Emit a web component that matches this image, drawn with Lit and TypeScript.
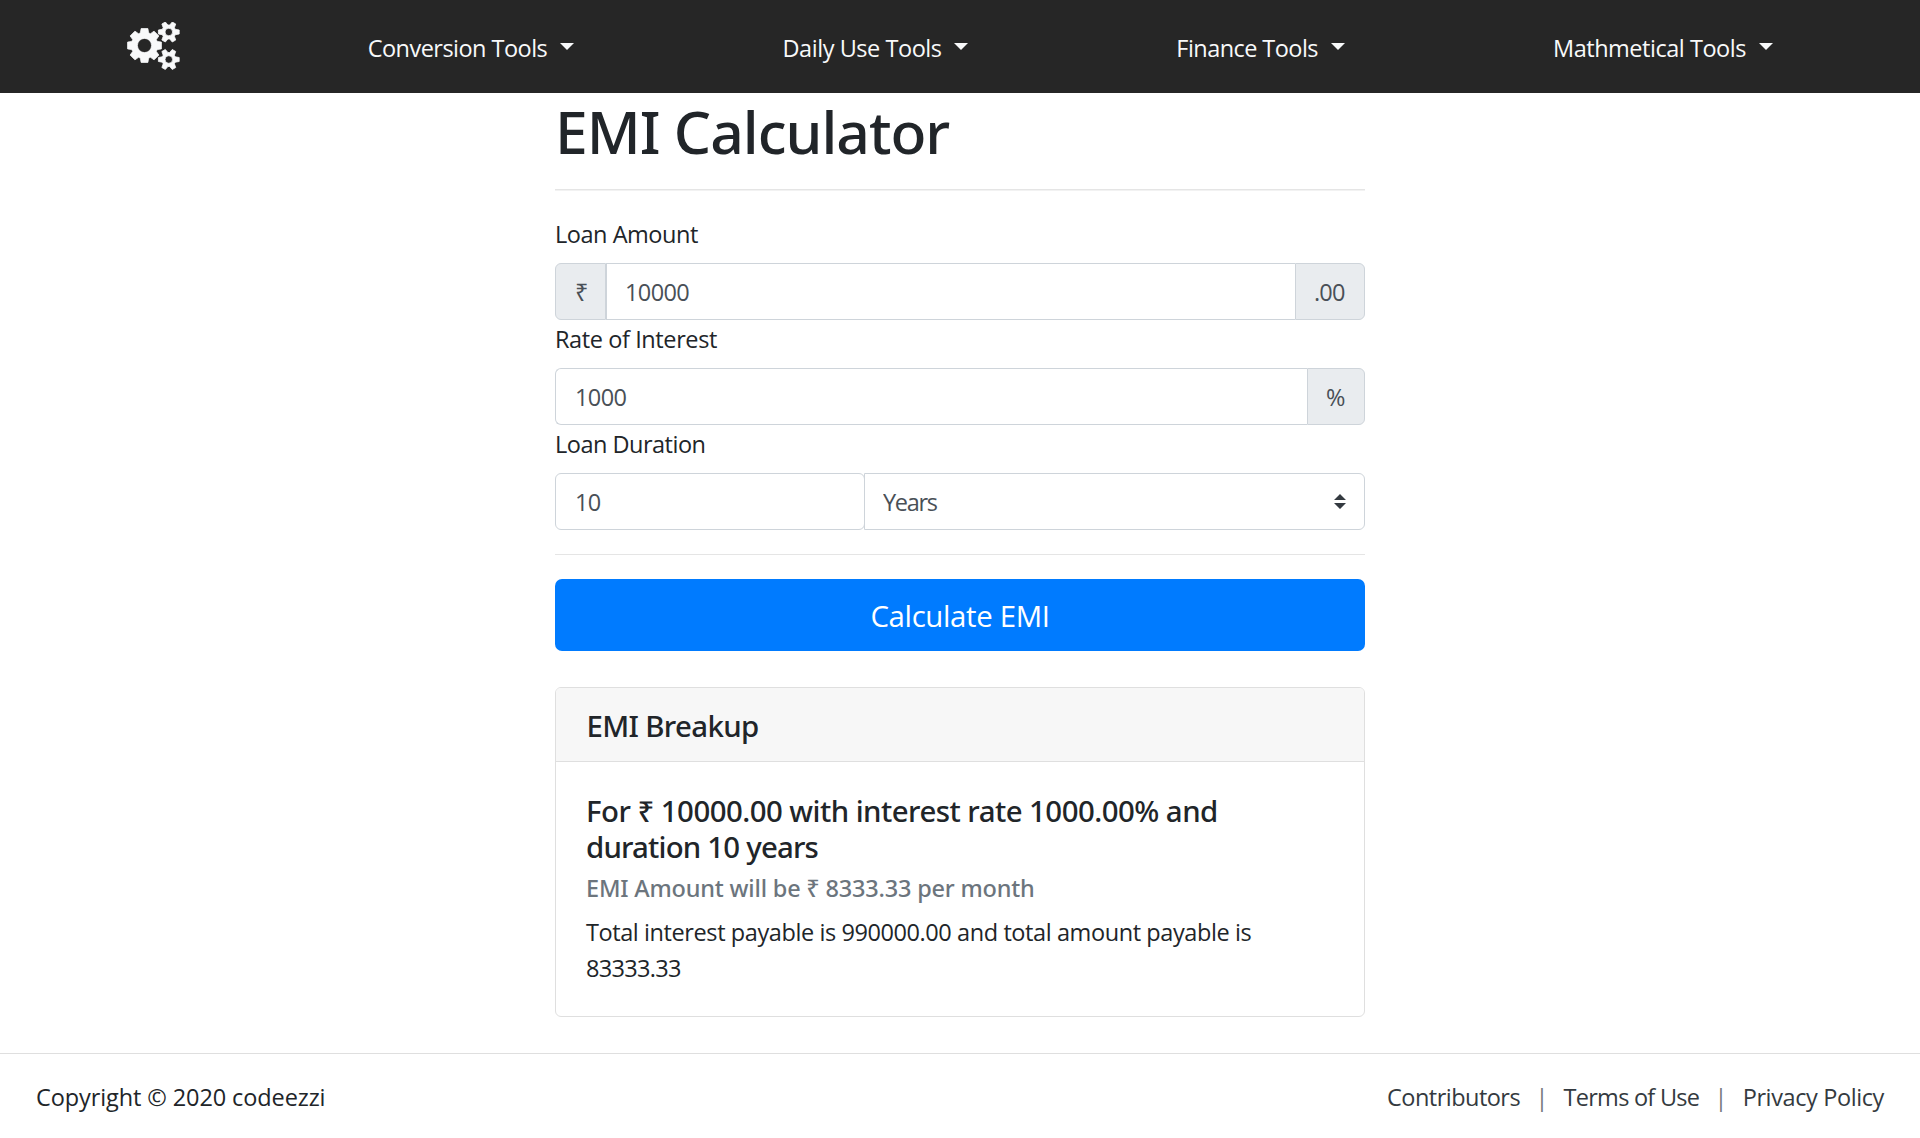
import { LitElement, html, css, svg } from "lit";
import { customElement } from "lit/decorators.js";

/** Outline of a cog with `teeth` tapered teeth and a round bore. */
function gear(
  cx: number,
  cy: number,
  outer: number,
  body: number,
  bore: number,
  teeth: number,
  tipHalf: number,
  baseHalf: number,
): string {
  const pts: string[] = [];
  for (let i = 0; i < teeth; i++) {
    const a = (i / teeth) * Math.PI * 2;
    const at = (r: number, off: number) => {
      const x = cx + r * Math.cos(a) - off * Math.sin(a);
      const y = cy + r * Math.sin(a) + off * Math.cos(a);
      return `${x.toFixed(2)} ${y.toFixed(2)}`;
    };
    pts.push(at(body, -baseHalf), at(outer, -tipHalf), at(outer, tipHalf), at(body, baseHalf));
  }
  return (
    `M${pts.join("L")}Z` +
    `M${cx - bore} ${cy}a${bore} ${bore} 0 1 0 ${bore * 2} 0a${bore} ${bore} 0 1 0 ${-bore * 2} 0Z`
  );
}

@customElement("site-nav")
export class SiteNav extends LitElement {
  static styles = css`
    :host {
      display: block;
    }
    .bar {
      box-sizing: border-box;
      height: 93px;
      padding: 0 147px 0 127px;
      background: #262626;
      display: flex;
      align-items: center;
    }
    .logo {
      display: block;
      width: 53px;
      height: 48px;
      margin: 0 186.7px 1.5px 0;
      fill: #f8f9fa;
      stroke: #f8f9fa;
      stroke-width: 0.8;
      stroke-linejoin: round;
    }
    .menu {
      flex: 1;
      display: flex;
      justify-content: space-between;
    }
    .item {
      display: flex;
      align-items: center;
      justify-content: space-between;
      color: #f8f9fa;
      font: 400 23.5px/36px "Open Sans", "Noto Sans", sans-serif;
      white-space: nowrap;
      text-decoration: none;
    }
    .text {
      padding: 3px 0 1px 1px;
    }
    .conversion {
      width: 207.5px;
      letter-spacing: -0.53px;
    }
    .daily {
      width: 186.5px;
      letter-spacing: -0.45px;
    }
    .finance {
      width: 169.3px;
      letter-spacing: -0.56px;
    }
    .math {
      width: 221px;
      letter-spacing: -0.47px;
    }
    .caret {
      border: 7.2px solid transparent;
      border-top-color: currentColor;
      border-bottom: 0;
    }
  `;

  render() {
    const items = [
      ["conversion", "Conversion Tools"],
      ["daily", "Daily Use Tools"],
      ["finance", "Finance Tools"],
      ["math", "Mathmetical Tools"],
    ];
    return html`
      <nav class="bar">
        <svg class="logo" viewBox="0 0 53 48">
          ${svg`<path fill-rule="evenodd" d=${gear(17.5, 23.5, 16.9, 12.6, 7.1, 8, 3.4, 4.1)}></path>
          <path fill-rule="evenodd" d=${gear(41.8, 10, 10.4, 6.5, 3.8, 6, 2, 2.7)}></path>
          <path fill-rule="evenodd" d=${gear(41.8, 37.5, 10.4, 6.5, 3.8, 6, 2, 2.7)}></path>`}
        </svg>
        <div class="menu">
          ${items.map(
            ([key, label]) => html`<a class="item ${key}"><span class="text">${label}</span><span class="caret"></span></a>`,
          )}
        </div>
      </nav>
    `;
  }
}

@customElement("emi-form")
export class EmiForm extends LitElement {
  static styles = css`
    :host {
      display: block;
      color: #212529;
      font: 400 23.5px/36px "Open Sans", "Noto Sans", sans-serif;
    }
    .label {
      display: block;
      height: 48px;
      line-height: 38px;
    }
    .amount-label {
      letter-spacing: -0.46px;
    }
    .rate-label {
      letter-spacing: -0.4px;
    }
    .duration-label {
      letter-spacing: -0.5px;
    }
    .group {
      display: flex;
      height: 57px;
    }
    .field,
    .addon {
      box-sizing: border-box;
      height: 57px;
      border: 1px solid #ced4da;
      border-radius: 6px;
      color: #495057;
      font: inherit;
    }
    .field {
      flex: 1;
      min-width: 0;
      margin: 0;
      padding: 1px 18px 0 19px;
      background: #fff;
      outline: none;
      letter-spacing: -0.6px;
    }
    .addon {
      flex: none;
      padding: 0 0 0 19px;
      background: #e9ecef;
      line-height: 57px;
    }
    .before {
      width: 51px;
      border-radius: 6px 0 0 6px;
    }
    .cents {
      width: 70px;
      padding-left: 18px;
      letter-spacing: -0.8px;
    }
    .percent {
      width: 58px;
      padding-left: 18px;
    }
    .after {
      border-radius: 0 6px 6px 0;
    }
    .mid {
      padding-left: 18px;
      border-radius: 0;
      border-right: 0;
    }
    .first {
      border-radius: 6px 0 0 6px;
      border-right: 0;
    }
    .years {
      flex: none;
      width: 310px;
    }
    .unit {
      flex: 1;
      display: grid;
      align-items: center;
      margin-left: -1px;
    }
    .unit > * {
      grid-area: 1 / 1;
    }
    .select {
      width: 100%;
      appearance: none;
      border-radius: 0 6px 6px 0;
      letter-spacing: -1.3px;
      padding-left: 18px;
    }
    .arrows {
      justify-self: end;
      margin: 0 19px 1px 0;
      width: 12px;
      height: 15px;
      fill: #343a40;
      pointer-events: none;
    }
    .rule {
      height: 1px;
      margin: 24px 0;
      background: #e5e5e5;
    }
    .submit {
      display: block;
      width: 100%;
      height: 72px;
      border: 0;
      border-radius: 7px;
      padding: 2px 0 0;
      background: #007bff;
      color: #fff;
      font: 400 29.4px/45px "Open Sans", "Noto Sans", sans-serif;
      letter-spacing: -0.35px;
    }
  `;

  render() {
    return html`
      <label class="label amount-label">Loan Amount</label>
      <div class="group">
        <span class="addon before">₹</span>
        <input class="field mid" .value=${"10000"} />
        <span class="addon after cents">.00</span>
      </div>
      <label class="label rate-label">Rate of Interest</label>
      <div class="group">
        <input class="field first" .value=${"1000"} />
        <span class="addon after percent">%</span>
      </div>
      <label class="label duration-label">Loan Duration</label>
      <div class="group">
        <input class="field years" .value=${"10"} />
        <div class="unit">
          <select class="field select">
            <option>Years</option>
          </select>
          <svg class="arrows" viewBox="0 0 12 15"><path d="M0 6L6 0l6 6zM0 9h12l-6 6z"></path></svg>
        </div>
      </div>
      <div class="rule"></div>
      <button class="submit">Calculate EMI</button>
    `;
  }
}

@customElement("emi-breakup")
export class EmiBreakup extends LitElement {
  static styles = css`
    :host {
      display: block;
      color: #212529;
    }
    .card {
      box-sizing: border-box;
      height: 330px;
      border: 1px solid #dfdfdf;
      border-radius: 6px;
      background: #fff;
      overflow: hidden;
    }
    .head {
      box-sizing: border-box;
      height: 74px;
      padding: 20px 30.5px 0;
      border-bottom: 1px solid #dfdfdf;
      background: #f7f7f7;
      font: 500 29.4px/36px "Noto Sans", "Open Sans", sans-serif;
      letter-spacing: -0.65px;
    }
    .body {
      padding: 31px 30px 0;
    }
    .title {
      margin: 0;
      font: 500 29.4px/36px "Noto Sans", "Open Sans", sans-serif;
      white-space: nowrap;
    }
    .line {
      display: block;
    }
    .terms {
      letter-spacing: -0.53px;
    }
    .span {
      letter-spacing: -0.8px;
    }
    .subtitle {
      margin: 9px 0 0;
      color: #6c757d;
      font: 500 23.5px/28px "Noto Sans", "Open Sans", sans-serif;
      letter-spacing: -0.19px;
    }
    .total {
      margin: 12px 0 0;
      font: 400 23.5px/36px "Open Sans", "Noto Sans", sans-serif;
      white-space: nowrap;
    }
    .interest {
      letter-spacing: -0.41px;
    }
    .payable {
      letter-spacing: -0.7px;
    }
  `;

  render() {
    return html`
      <section class="card">
        <div class="head">EMI Breakup</div>
        <div class="body">
          <h5 class="title">
            <span class="line terms">For ₹ 10000.00 with interest rate 1000.00% and</span>
            <span class="line span">duration 10 years</span>
          </h5>
          <h6 class="subtitle">EMI Amount will be ₹ 8333.33 per month</h6>
          <p class="total">
            <span class="line interest">Total interest payable is 990000.00 and total amount payable is</span>
            <span class="line payable">83333.33</span>
          </p>
        </div>
      </section>
    `;
  }
}

@customElement("site-footer")
export class SiteFooter extends LitElement {
  static styles = css`
    :host {
      display: block;
    }
    .footer {
      box-sizing: border-box;
      height: 85px;
      border-top: 1px solid #dfdfdf;
      padding: 25px 36px 0;
      display: flex;
      justify-content: space-between;
      color: #212529;
      font: 400 23.5px/36px "Open Sans", "Noto Sans", sans-serif;
      white-space: nowrap;
    }
    .copy {
      letter-spacing: -0.1px;
    }
    .links {
      display: flex;
      justify-content: space-between;
      width: 497px;
      color: #343a40;
    }
    .contributors {
      letter-spacing: -0.52px;
    }
    .tos {
      letter-spacing: -0.74px;
    }
    .privacy {
      letter-spacing: -0.39px;
    }
    .sep {
      color: #75797d;
    }
  `;

  render() {
    return html`
      <footer class="footer">
        <span class="copy">Copyright © 2020 codeezzi</span>
        <div class="links">
          <span class="contributors">Contributors</span>
          <span class="sep">|</span>
          <span class="tos">Terms of Use</span>
          <span class="sep">|</span>
          <span class="privacy">Privacy Policy</span>
        </div>
      </footer>
    `;
  }
}

@customElement("app-root")
export class AppRoot extends LitElement {
  static styles = css`
    :host {
      display: block;
      height: 1138px;
      overflow: hidden;
      background: #fff;
    }
    .main {
      box-sizing: border-box;
      width: 810px;
      height: 960px;
      margin: 0 auto;
    }
    .heading {
      margin: 0;
      height: 72px;
      color: #212529;
      font: 500 58.8px/76px "Noto Sans", "Open Sans", sans-serif;
      letter-spacing: -1px;
      white-space: nowrap;
    }
    .rule {
      height: 1px;
      margin: 24px 0;
      border-bottom: 1px solid #f2f2f2;
      background: #e5e5e5;
    }
    .form {
      margin-bottom: 36px;
    }
  `;

  render() {
    return html`
      <site-nav></site-nav>
      <main class="main">
        <h1 class="heading">EMI Calculator</h1>
        <div class="rule"></div>
        <emi-form class="form"></emi-form>
        <emi-breakup></emi-breakup>
      </main>
      <site-footer></site-footer>
    `;
  }
}
